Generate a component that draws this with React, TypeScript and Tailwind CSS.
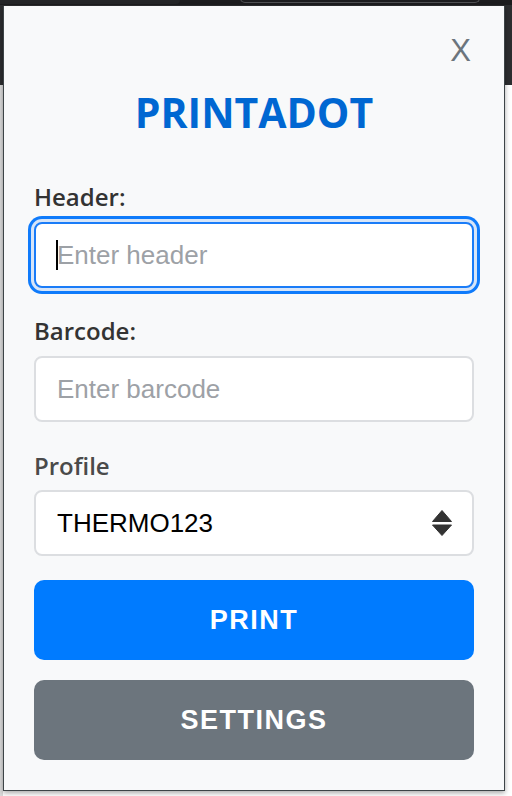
import React from "react";

export default function App() {
  return (
    <div className="relative w-[512px] h-[796px] overflow-hidden bg-[#f3f3f3]">
      {/* browser chrome behind popup */}
      <div className="flex flex-col h-[85px] bg-[#2c2d2f]">
        <div className="relative h-[5px] bg-[#1c1c1e]">
          <div className="absolute left-0 top-0 w-[180px] h-[4px] rounded-br-[4px] bg-[#242527]" />
          <div className="absolute left-[240px] top-[-6px] w-[240px] h-[9px] rounded-b-[5px] border-b border-x border-[#505154]" />
        </div>
      </div>
      <div className="h-[711px] flex">
        <div className="w-[3px] bg-[#dadada]" />
        <div className="flex-1 bg-white" />
      </div>

      {/* popup panel */}
      <div className="absolute left-[3px] top-[6px] w-[502px] h-[785px] bg-[#f8f9fa] border-x border-b border-[#3d4447] shadow-[0_2px_5px_rgba(0,0,0,0.35)] flex flex-col px-[30px] pt-[29px]">
        <div className="flex justify-end h-[32px] mr-[3px]">
          <button
            className="text-[31px] leading-[32px] text-[#6c757d]"
            style={{ fontFamily: '"Liberation Sans", Arial, sans-serif' }}
          >
            X
          </button>
        </div>

        <h1
          className="mt-[21px] h-[48px] text-center text-[41px] leading-[48px] font-bold text-[#0067d2]"
          style={{ fontFamily: '"Open Sans", "Noto Sans", sans-serif' }}
        >
          PRINTADOT
        </h1>

        <label
          className="mt-[45px] block h-[32px] text-[24px] leading-[32px] font-semibold text-[#333333]"
          style={{ fontFamily: '"Open Sans", "Noto Sans", sans-serif' }}
        >
          Header:
        </label>
        <div className="relative mt-[9px]">
          <input
            type="text"
            placeholder="Enter header"
            className="block w-full h-[66px] rounded-[8px] bg-white border-2 border-[#1a7cf8] pl-[21px] pr-[16px] text-[26px] text-black placeholder:text-[#9da1a6] outline-none shadow-[0_0_0_3px_#d7e5f8,0_0_0_6px_#0f7bfb]"
            style={{ fontFamily: '"Liberation Sans", Arial, sans-serif' }}
          />
          <div className="absolute left-[22px] top-[18px] w-[2px] h-[30px] bg-black" />
        </div>

        <label
          className="mt-[27px] block h-[32px] text-[24px] leading-[32px] font-semibold text-[#333333]"
          style={{ fontFamily: '"Open Sans", "Noto Sans", sans-serif' }}
        >
          Barcode:
        </label>
        <input
          type="text"
          placeholder="Enter barcode"
          className="mt-[9px] block w-full h-[66px] rounded-[8px] bg-white border-2 border-[#dcdee1] pl-[21px] pr-[16px] text-[26px] text-black placeholder:text-[#9da1a6] outline-none"
          style={{ fontFamily: '"Liberation Sans", Arial, sans-serif' }}
        />

        <label
          className="mt-[28px] block h-[32px] text-[24px] leading-[32px] font-semibold text-[#4a4a4a]"
          style={{ fontFamily: '"Open Sans", "Noto Sans", sans-serif' }}
        >
          Profile
        </label>
        <div className="relative mt-[8px]">
          <select
            defaultValue="THERMO123"
            className="block w-full h-[66px] appearance-none rounded-[8px] bg-white border-2 border-[#dcdee1] pl-[21px] pr-[50px] text-[26px] text-black outline-none"
            style={{ fontFamily: '"Liberation Sans", Arial, sans-serif' }}
          >
            <option value="THERMO123">THERMO123</option>
          </select>
          <svg
            className="absolute right-[22px] top-[20px] pointer-events-none"
            width="20"
            height="26"
            viewBox="0 0 20 26"
          >
            <path d="M10 0.5 L19.5 11.5 L0.5 11.5 Z" fill="#333" strokeLinejoin="round" stroke="#333" strokeWidth="1" />
            <path d="M0.5 15 L19.5 15 L10 25.5 Z" fill="#333" strokeLinejoin="round" stroke="#333" strokeWidth="1" />
          </svg>
        </div>

        <button
          className="mt-[24px] h-[80px] w-full rounded-[10px] bg-[#007bff] text-white text-[27px] font-bold tracking-[1.5px]"
          style={{ fontFamily: '"Liberation Sans", Arial, sans-serif' }}
        >
          PRINT
        </button>
        <button
          className="mt-[20px] h-[80px] w-full rounded-[10px] bg-[#6c757d] text-white text-[27px] font-bold tracking-[1.5px]"
          style={{ fontFamily: '"Liberation Sans", Arial, sans-serif' }}
        >
          SETTINGS
        </button>
      </div>
    </div>
  );
}
